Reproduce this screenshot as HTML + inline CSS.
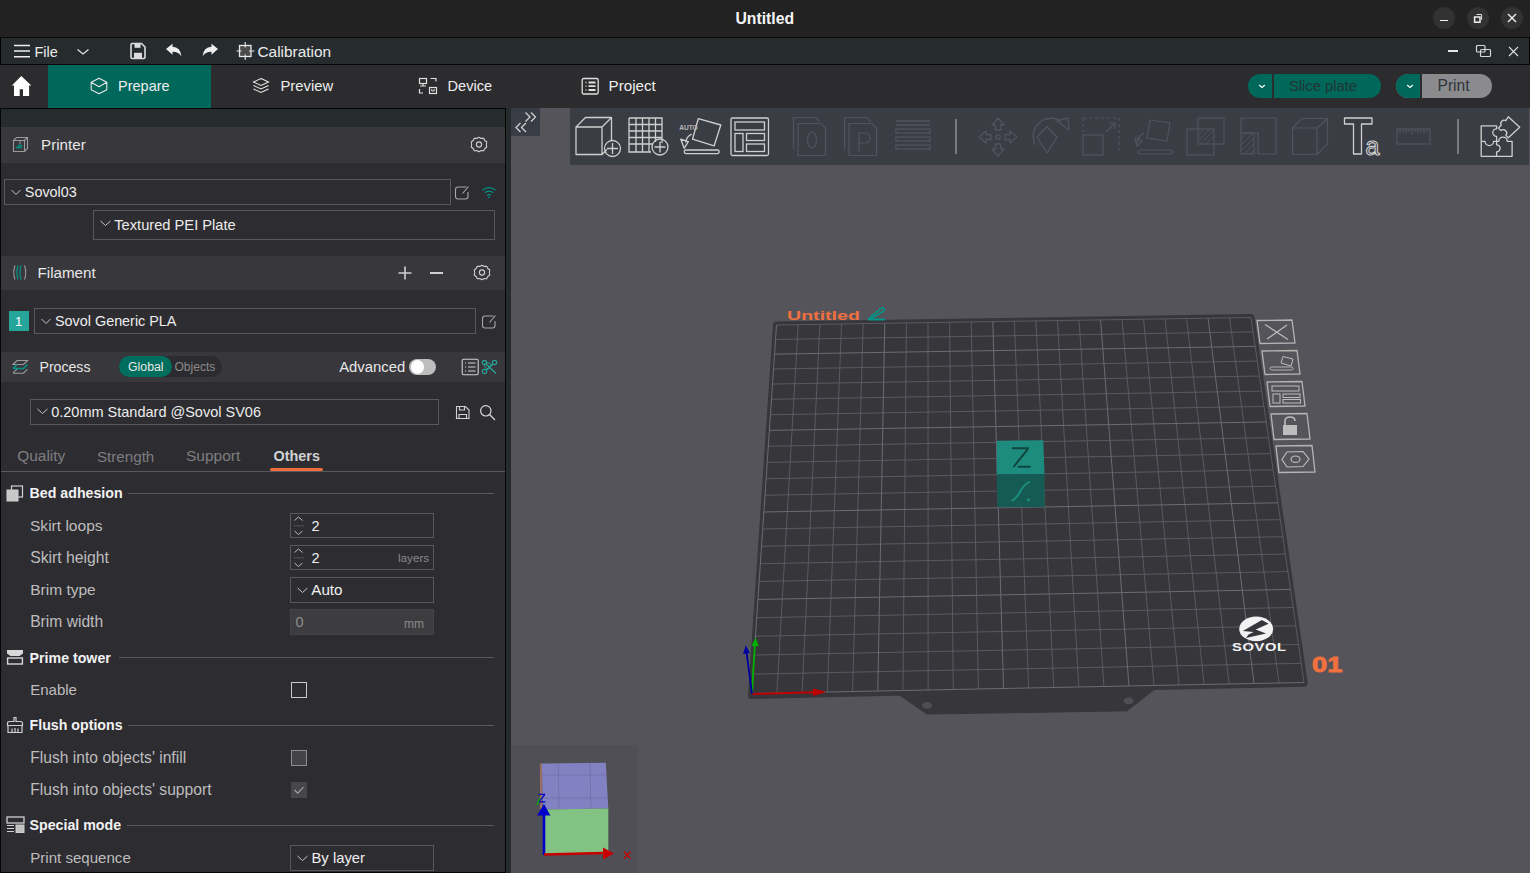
<!DOCTYPE html>
<html><head><meta charset="utf-8">
<style>
*{margin:0;padding:0;box-sizing:border-box}
html,body{width:1530px;height:873px;overflow:hidden;background:#55545a;font-family:"Liberation Sans",sans-serif;color:#e8e8e8}
.a{position:absolute}
.t{position:absolute;white-space:nowrap;line-height:1}
svg{position:absolute;overflow:visible}
</style></head><body>
<div class="a" style="left:0px;top:0px;width:1530px;height:37px;background:#222222;"></div>
<div class="t" style="left:735.5px;top:10.61px;font-size:15.75px;color:#f4f4f4;font-weight:bold;">Untitled</div>
<div class="a" style="left:1433px;top:7px;width:22px;height:22px;border-radius:50%;background:#323232"></div>
<div class="a" style="left:1467px;top:7px;width:22px;height:22px;border-radius:50%;background:#323232"></div>
<div class="a" style="left:1501px;top:7px;width:22px;height:22px;border-radius:50%;background:#323232"></div>
<div class="a" style="left:1440px;top:19.5px;width:8px;height:1.8px;background:#f0f0f0;"></div>
<svg style="left:1472px;top:13px;" width="12" height="11" viewBox="0 0 12 11"><rect x="2.6" y="4" width="5.4" height="5.2" fill="none" stroke="#f0f0f0" stroke-width="1.5"/><path d="M4.5 1.5H9.6V6.8" fill="none" stroke="#f0f0f0" stroke-width="0.9"/></svg>
<svg style="left:1507px;top:13px;" width="10" height="10" viewBox="0 0 10 10"><path d="M1 1L9 9M9 1L1 9" stroke="#f0f0f0" stroke-width="1.4"/></svg>
<div class="a" style="left:0px;top:37px;width:1530px;height:1px;background:#080808;"></div>
<div class="a" style="left:0px;top:38px;width:1530px;height:26px;background:#262b2e;"></div>
<div class="a" style="left:0px;top:38px;width:1px;height:26px;background:#000;"></div>
<div class="a" style="left:1529px;top:38px;width:1px;height:26px;background:#000;"></div>
<div class="a" style="left:0px;top:64px;width:1530px;height:1px;background:#080808;"></div>
<svg style="left:13px;top:44px;" width="18" height="14" viewBox="0 0 18 14"><path d="M1 1.5H17M1 7H17M1 12.7H17" stroke="#ececec" stroke-width="1.4"/></svg>
<div class="t" style="left:34.5px;top:44.77px;font-size:14.5px;color:#ececec;">File</div>
<svg style="left:76px;top:48px;" width="14" height="8" viewBox="0 0 14 8"><path d="M1.5 1.5L7 6L12.5 1.5" fill="none" stroke="#e0e0e0" stroke-width="1.3"/></svg>
<svg style="left:129px;top:42px;" width="18" height="18" viewBox="0 0 18 18"><path d="M2.2 1.5H12.5L16 5V15.3Q16 16.5 14.8 16.5H3.2Q2 16.5 2 15.3V2.7Q2 1.5 3.2 1.5Z" fill="none" stroke="#dcdcdc" stroke-width="1.6"/><rect x="5.5" y="2" width="6" height="3.8" fill="#dcdcdc"/><rect x="5" y="10.8" width="8" height="5.2" fill="#dcdcdc"/></svg>
<svg style="left:165px;top:43px;" width="18" height="15" viewBox="0 0 18 15"><path d="M1 6L7.5 0.8V3.8Q15.5 4 16.5 13.5Q14 8.8 7.5 8.8V11.8Z" fill="#eeeeee"/></svg>
<svg style="left:201px;top:43px;" width="18" height="15" viewBox="0 0 18 15"><path d="M17 6L10.5 0.8V3.8Q2.5 4 1.5 13.5Q4 8.8 10.5 8.8V11.8Z" fill="#eeeeee"/></svg>
<svg style="left:236px;top:42px;" width="19" height="18" viewBox="0 0 19 18"><rect x="3.5" y="3.5" width="11.5" height="11" fill="#4a4a4a" stroke="#e8e8e8" stroke-width="1.3"/><path d="M9.2 0V5.5M9.2 12.5V18M0.5 9H5.5M13 9H18.5" stroke="#e8e8e8" stroke-width="1.1"/></svg>
<div class="t" style="left:257.5px;top:43.71px;font-size:15.4px;color:#ececec;">Calibration</div>
<div class="a" style="left:1448px;top:50px;width:10px;height:1.5px;background:#e8e8e8;"></div>
<svg style="left:1475px;top:44px;" width="17" height="14" viewBox="0 0 17 14"><rect x="1.5" y="1.5" width="8.5" height="6.5" rx="1" fill="none" stroke="#d8d8d8" stroke-width="1.2"/><rect x="5.5" y="5.5" width="10" height="7" rx="1" fill="none" stroke="#d8d8d8" stroke-width="1.2"/></svg>
<svg style="left:1508px;top:46px;" width="11" height="11" viewBox="0 0 11 11"><path d="M1 1L10 10M10 1L1 10" stroke="#e0e0e0" stroke-width="1.1"/></svg>
<div class="a" style="left:0px;top:65px;width:1530px;height:43px;background:#2c2c2f;"></div>
<div class="a" style="left:48px;top:65px;width:163px;height:43px;background:#00675b;"></div>
<svg style="left:11px;top:75px;" width="21" height="22" viewBox="0 0 21 22"><path d="M10.3 0.9L0.8 10.6H3V21H8.7V14.2H12V21H18.1V10.6H20.3Z" fill="#ffffff"/></svg>
<svg style="left:90px;top:77px;" width="18" height="18" viewBox="0 0 18 18"><path d="M9 1.2L16.8 5.3V12.8L9 16.8L1.2 12.8V5.3Z M1.2 5.3L9 9.8L16.8 5.3" fill="none" stroke="#e8e8e8" stroke-width="1.1" stroke-linejoin="round"/></svg>
<div class="t" style="left:118.0px;top:78.97px;font-size:14.5px;color:#eeeeee;">Prepare</div>
<svg style="left:252px;top:77px;" width="18" height="18" viewBox="0 0 18 18"><path d="M9 1.5L16.5 5L9 8.5L1.5 5Z" fill="none" stroke="#e8e8e8" stroke-width="1.1"/><path d="M1.5 8.5L9 12L16.5 8.5M1.5 12L9 15.5L16.5 12" fill="none" stroke="#e8e8e8" stroke-width="1.1"/></svg>
<div class="t" style="left:280.5px;top:78.72px;font-size:14.8px;color:#eeeeee;">Preview</div>
<svg style="left:418px;top:77px;" width="20" height="18" viewBox="0 0 20 18"><rect x="1.5" y="1.5" width="7" height="5" fill="none" stroke="#e0e0e0" stroke-width="1.2"/><path d="M5 6.5V9M2 9H8" stroke="#e0e0e0" stroke-width="1.2"/><path d="M12.5 1.5H18V4.5M1.5 12V16H5" fill="none" stroke="#e0e0e0" stroke-width="1.2"/><rect x="11.5" y="10.5" width="7" height="6" fill="none" stroke="#e0e0e0" stroke-width="1.2"/><path d="M13.8 12V14H16.2V12" fill="none" stroke="#e0e0e0" stroke-width="1"/></svg>
<div class="t" style="left:447.5px;top:78.89px;font-size:14.6px;color:#eeeeee;">Device</div>
<svg style="left:581px;top:77px;" width="19" height="18" viewBox="0 0 19 18"><rect x="1.2" y="1.5" width="16" height="15.5" rx="1.5" fill="none" stroke="#e0e0e0" stroke-width="1.3"/><path d="M4.5 5.5H5.5M4.5 9.2H5.5M4.5 13H5.5" stroke="#e0e0e0" stroke-width="1.3"/><path d="M7.5 5.5H14.5M7.5 9.2H14.5M7.5 13H14.5" stroke="#e0e0e0" stroke-width="1.8"/></svg>
<div class="t" style="left:608.5px;top:78.38px;font-size:15.2px;color:#eeeeee;">Project</div>
<div class="a" style="left:1248px;top:74px;width:133px;height:24px;border-radius:12px;background:#00675b;overflow:hidden"><div class="a" style="left:23.5px;top:0;width:2.5px;height:24px;background:#2c2c2f"></div></div>
<svg style="left:1256px;top:82px;" width="12" height="8" viewBox="0 0 12 8"><path d="M3.2 3L6 5.4L8.8 3" fill="none" stroke="#fff" stroke-width="1.2"/></svg>
<div class="t" style="left:1289.0px;top:78.77px;font-size:14.74px;color:#223532;">Slice plate</div>
<div class="a" style="left:1396px;top:74px;width:96px;height:24px;border-radius:12px;background:#8b8b8d;overflow:hidden"><div class="a" style="left:0;top:0;width:24px;height:24px;background:#00675b"></div><div class="a" style="left:24px;top:0;width:2px;height:24px;background:#2c2c2f"></div></div>
<svg style="left:1404px;top:82px;" width="12" height="8" viewBox="0 0 12 8"><path d="M3.2 3L6 5.4L8.8 3" fill="none" stroke="#fff" stroke-width="1.2"/></svg>
<div class="t" style="left:1437.5px;top:78.34px;font-size:15.6px;color:#30343c;">Print</div>
<div class="a" style="left:0px;top:108px;width:506px;height:765px;background:#2d2c31;"></div>
<div class="a" style="left:0px;top:108px;width:506px;height:1px;background:#050505;"></div>
<div class="a" style="left:0px;top:108px;width:1px;height:765px;background:#050505;"></div>
<div class="a" style="left:505px;top:108px;width:1px;height:765px;background:#050505;"></div>
<div class="a" style="left:0px;top:872px;width:506px;height:1px;background:#050505;"></div>
<div class="a" style="left:506px;top:108px;width:5px;height:765px;background:#262b2e;"></div>
<div class="a" style="left:1px;top:109px;width:504px;height:18px;background:#262b2e;"></div>
<div class="a" style="left:1px;top:127px;width:504px;height:36px;background:#38373c;"></div>
<svg style="left:12px;top:136px;" width="17" height="17" viewBox="0 0 17 17"><path d="M1.5 4.5L4.5 1.5H15.5V12.5L12.5 15.5H1.5Z M1.5 4.5H12.5V15.5 M12.5 4.5L15.5 1.5" fill="none" stroke="#9a9a9a" stroke-width="1.1"/><path d="M8 4.5V8" stroke="#9a9a9a" stroke-width="1"/><path d="M4 11.5H10M6 9.5H10" stroke="#009688" stroke-width="1.5"/></svg>
<div class="t" style="left:41.0px;top:137.18px;font-size:15.2px;color:#e6e6e6;">Printer</div>
<svg style="left:469px;top:135px;" width="20" height="20" viewBox="0 0 20 20"><path d="M10 2.2L12.2 3.4L14.7 3.2L15.8 5.5L17.8 7L17.3 9.5L17.8 12L15.8 13.5L14.7 15.8L12.2 15.6L10 16.8L7.8 15.6L5.3 15.8L4.2 13.5L2.2 12L2.7 9.5L2.2 7L4.2 5.5L5.3 3.2L7.8 3.4Z" fill="none" stroke="#d0d0d0" stroke-width="1.1" stroke-linejoin="round"/><circle cx="10" cy="9.5" r="2.6" fill="none" stroke="#d0d0d0" stroke-width="1.1"/></svg>
<div class="a" style="left:4px;top:179px;width:447px;height:26px;background:transparent;border:1px solid #59585c;"></div>
<svg style="left:10px;top:188px;" width="12" height="8" viewBox="0 0 12 8"><path d="M1.5 2L6 6.5L10.5 2" fill="none" stroke="#c8c8c8" stroke-width="1"/></svg>
<div class="t" style="left:24.8px;top:184.66px;font-size:14.4px;color:#ececec;">Sovol03</div>
<svg style="left:454px;top:184px;" width="16" height="16" viewBox="0 0 16 16"><path d="M12.5 3H4Q1.5 3 1.5 5.5V12.5Q1.5 15 4 15H11.5Q14 15 14 12.5V8" fill="none" stroke="#a8a8a8" stroke-width="1.1"/><path d="M8.5 9.5L14.5 2.5" stroke="#a8a8a8" stroke-width="1.1"/></svg>
<svg style="left:481px;top:185px;" width="16" height="14" viewBox="0 0 16 14"><path d="M1.5 5.2Q8 0 14.5 5.2M3.8 7.8Q8 4.5 12.2 7.8M6 10.3Q8 9 10 10.3" fill="none" stroke="#009688" stroke-width="1.3"/><circle cx="8" cy="12.3" r="0.9" fill="#009688"/></svg>
<div class="a" style="left:93px;top:210px;width:402px;height:30px;background:transparent;border:1px solid #59585c;"></div>
<svg style="left:99px;top:219px;" width="13" height="8" viewBox="0 0 13 8"><path d="M1.5 2L6.5 6.5L11.5 2" fill="none" stroke="#c8c8c8" stroke-width="1"/></svg>
<div class="t" style="left:114.3px;top:217.54px;font-size:14.66px;color:#ececec;">Textured PEI Plate</div>
<div class="a" style="left:1px;top:256px;width:504px;height:34px;background:#38373c;"></div>
<svg style="left:11px;top:264px;" width="17" height="17" viewBox="0 0 17 17"><path d="M4 1.5Q1.5 8.5 4 15.5M13.5 1.5Q16 8.5 13.5 15.5" fill="none" stroke="#9a9a9a" stroke-width="1.1"/><path d="M7 1.5Q4.8 8.5 7 15.5M10 1.5Q7.8 8.5 10 15.5" fill="none" stroke="#009688" stroke-width="1.2"/></svg>
<div class="t" style="left:37.5px;top:265.18px;font-size:15.2px;color:#e6e6e6;">Filament</div>
<svg style="left:397px;top:265px;" width="16" height="16" viewBox="0 0 16 16"><path d="M8 1.5V14.5M1.5 8H14.5" stroke="#d0d0d0" stroke-width="1.6"/></svg>
<div class="a" style="left:430px;top:272px;width:12.5px;height:1.7px;background:#d0d0d0;"></div>
<svg style="left:472px;top:263px;" width="20" height="20" viewBox="0 0 20 20"><path d="M10 2.2L12.2 3.4L14.7 3.2L15.8 5.5L17.8 7L17.3 9.5L17.8 12L15.8 13.5L14.7 15.8L12.2 15.6L10 16.8L7.8 15.6L5.3 15.8L4.2 13.5L2.2 12L2.7 9.5L2.2 7L4.2 5.5L5.3 3.2L7.8 3.4Z" fill="none" stroke="#d0d0d0" stroke-width="1.1" stroke-linejoin="round"/><circle cx="10" cy="9.5" r="2.6" fill="none" stroke="#d0d0d0" stroke-width="1.1"/></svg>
<div class="a" style="left:9px;top:311px;width:20px;height:20px;background:#26a69a;"></div>
<div class="t" style="left:15.0px;top:315.25px;font-size:13px;color:#ffffff;">1</div>
<div class="a" style="left:34px;top:308px;width:442px;height:26px;background:transparent;border:1px solid #59585c;"></div>
<svg style="left:40px;top:317px;" width="12" height="8" viewBox="0 0 12 8"><path d="M1.5 2L6 6.5L10.5 2" fill="none" stroke="#c8c8c8" stroke-width="1"/></svg>
<div class="t" style="left:55.0px;top:313.67px;font-size:14.39px;color:#ececec;">Sovol Generic PLA</div>
<svg style="left:481px;top:313px;" width="16" height="16" viewBox="0 0 16 16"><path d="M12.5 3H4Q1.5 3 1.5 5.5V12.5Q1.5 15 4 15H11.5Q14 15 14 12.5V8" fill="none" stroke="#a8a8a8" stroke-width="1.1"/><path d="M8.5 9.5L14.5 2.5" stroke="#a8a8a8" stroke-width="1.1"/></svg>
<div class="a" style="left:1px;top:352px;width:504px;height:30px;background:#38373c;"></div>
<svg style="left:12px;top:359px;" width="17" height="17" viewBox="0 0 17 17"><path d="M1 5.5L5 1.5H15.5L11.5 5.5Z" fill="none" stroke="#9a9a9a" stroke-width="1.1"/><path d="M1 9.5L5 5.5M15.5 5.5L11.5 9.5H1" fill="none" stroke="#009688" stroke-width="1.5"/><path d="M1 14.2L5 10.2M15.5 10.2L11.5 14.2H1" fill="none" stroke="#9a9a9a" stroke-width="1.1"/></svg>
<div class="t" style="left:39.5px;top:359.90px;font-size:14.12px;color:#e6e6e6;">Process</div>
<div class="a" style="left:119px;top:355.5px;width:103px;height:21.5px;border-radius:10.75px;background:#2c2b30"></div>
<div class="a" style="left:119px;top:355.5px;width:52.5px;height:21.5px;border-radius:10.75px;background:#006e5e"></div>
<div class="t" style="left:128.0px;top:360.85px;font-size:12.3px;color:#e8e8e8;">Global</div>
<div class="t" style="left:174.4px;top:361.01px;font-size:12.1px;color:#8a8a8a;">Objects</div>
<div class="t" style="left:339.2px;top:359.67px;font-size:14.86px;color:#e6e6e6;">Advanced</div>
<div class="a" style="left:409px;top:359px;width:27px;height:16px;border-radius:8px;background:#bdbdbd"></div>
<div class="a" style="left:410.5px;top:360.2px;width:13.6px;height:13.6px;border-radius:50%;background:#ffffff"></div>
<svg style="left:461px;top:358px;" width="19" height="18" viewBox="0 0 19 18"><rect x="1.2" y="1.2" width="16" height="15.6" rx="1.5" fill="none" stroke="#cfcfcf" stroke-width="1.1"/><path d="M4 5H5M4 9H5M4 13H5M7 5H14.5M7 9H14.5M7 13H14.5" stroke="#cfcfcf" stroke-width="1.2"/></svg>
<svg style="left:481px;top:359px;" width="17" height="16" viewBox="0 0 17 16"><circle cx="3.5" cy="3.5" r="2.2" fill="none" stroke="#26a69a" stroke-width="1.2"/><circle cx="13.5" cy="3.5" r="2.2" fill="none" stroke="#26a69a" stroke-width="1.2"/><circle cx="3.5" cy="12.5" r="2.2" fill="none" stroke="#26a69a" stroke-width="1.2"/><path d="M5 5L15 14.5M11.8 5.2L5.5 11" stroke="#26a69a" stroke-width="1.3"/><circle cx="6.5" cy="6.5" r="3" fill="none" stroke="#26a69a" stroke-width="1"/></svg>
<div class="a" style="left:30px;top:399px;width:409px;height:26px;background:transparent;border:1px solid #59585c;"></div>
<svg style="left:36px;top:407px;" width="13" height="8" viewBox="0 0 13 8"><path d="M1.5 2L6.5 6.5L11.5 2" fill="none" stroke="#c8c8c8" stroke-width="1"/></svg>
<div class="t" style="left:51.2px;top:404.58px;font-size:14.5px;color:#ececec;">0.20mm Standard @Sovol SV06</div>
<svg style="left:455px;top:405px;" width="16" height="15" viewBox="0 0 16 15"><path d="M1.5 1.5H10.5L14 5V13.5H1.5Z" fill="none" stroke="#d0d0d0" stroke-width="1.1"/><path d="M4.5 1.5V5H9.5V1.5M4 13.5V9.5H11.5V13.5" fill="none" stroke="#d0d0d0" stroke-width="1.1"/></svg>
<svg style="left:479px;top:404px;" width="18" height="18" viewBox="0 0 18 18"><circle cx="6.8" cy="6.8" r="5.2" fill="none" stroke="#d8d8d8" stroke-width="1.2"/><path d="M10.5 10.5L16 16" stroke="#d8d8d8" stroke-width="1.3"/></svg>
<div class="t" style="left:17.2px;top:448.46px;font-size:15.46px;color:#7e7e80;">Quality</div>
<div class="t" style="left:97.0px;top:448.71px;font-size:15.16px;color:#7e7e80;">Strength</div>
<div class="t" style="left:186.0px;top:448.44px;font-size:15.48px;color:#7e7e80;">Support</div>
<div class="t" style="left:273.6px;top:449.36px;font-size:14.4px;color:#d2d2d2;font-weight:bold;">Others</div>
<div class="a" style="left:270px;top:467.5px;width:53px;height:3.5px;border-radius:2px;background:#f26b3a"></div>
<div class="a" style="left:1px;top:471px;width:504px;height:1px;background:#5a5a5e;"></div>
<svg style="left:6px;top:485px" width="18" height="17" viewBox="0 0 18 17"><rect x="5.5" y="1" width="11" height="11" fill="none" stroke="#d0d0d0" stroke-width="1.2"/><rect x="1" y="5" width="11" height="11" fill="#c8c8c8" stroke="#d0d0d0" stroke-width="1"/></svg>
<div class="t" style="left:29.6px;top:486.13px;font-size:14.2px;color:#f2f2f2;font-weight:bold;">Bed adhesion</div>
<div class="a" style="left:128px;top:493px;width:366px;height:1px;background:#5a5a5e;"></div>
<div class="t" style="left:30.0px;top:517.58px;font-size:15.55px;color:#bdbdbd;">Skirt loops</div>
<div class="a" style="left:290px;top:513px;width:144px;height:25px;background:transparent;border:1px solid #59585c;"></div>
<svg style="left:292px;top:515px;" width="14" height="21" viewBox="0 0 14 21"><path d="M2.5 5.5L6.5 2L10.5 5.5M2.5 16L6.5 19.5L10.5 16" fill="none" stroke="#bdbdbd" stroke-width="1"/><path d="M1.5 10.8H12.5" stroke="#555559" stroke-width="1"/></svg>
<div class="t" style="left:311.5px;top:518.77px;font-size:14.5px;color:#f0f0f0;">2</div>
<div class="t" style="left:30.2px;top:550.01px;font-size:15.75px;color:#bdbdbd;">Skirt height</div>
<div class="a" style="left:290px;top:545px;width:144px;height:25px;background:transparent;border:1px solid #59585c;"></div>
<svg style="left:292px;top:547px;" width="14" height="21" viewBox="0 0 14 21"><path d="M2.5 5.5L6.5 2L10.5 5.5M2.5 16L6.5 19.5L10.5 16" fill="none" stroke="#bdbdbd" stroke-width="1"/><path d="M1.5 10.8H12.5" stroke="#555559" stroke-width="1"/></svg>
<div class="t" style="left:311.5px;top:550.77px;font-size:14.5px;color:#f0f0f0;">2</div>
<div class="t" style="left:398.0px;top:552.35px;font-size:11.7px;color:#8a8a8a;">layers</div>
<div class="t" style="left:30.2px;top:582.30px;font-size:15.53px;color:#bdbdbd;">Brim type</div>
<div class="a" style="left:290px;top:577px;width:144px;height:25.5px;background:transparent;border:1px solid #59585c;"></div>
<svg style="left:296px;top:586px;" width="13" height="8" viewBox="0 0 13 8"><path d="M1.5 2L6.5 6.5L11.5 2" fill="none" stroke="#c8c8c8" stroke-width="1"/></svg>
<div class="t" style="left:311.3px;top:581.98px;font-size:15.2px;color:#f0f0f0;">Auto</div>
<div class="t" style="left:30.2px;top:613.71px;font-size:15.64px;color:#bdbdbd;">Brim width</div>
<div class="a" style="left:290px;top:609px;width:144px;height:26px;background:#3d3d40;border:1px solid #444447;"></div>
<div class="t" style="left:295.5px;top:615.37px;font-size:14.5px;color:#8c8c8c;">0</div>
<div class="t" style="left:404.0px;top:617.50px;font-size:12px;color:#8c8c8c;">mm</div>
<svg style="left:6px;top:649px" width="18" height="16" viewBox="0 0 18 16"><path d="M1 1H17V4.5L13.5 7H4.5L1 4.5Z" fill="#d8d8d8"/><rect x="1.6" y="9" width="14.8" height="6" fill="none" stroke="#d8d8d8" stroke-width="1.4"/></svg>
<div class="t" style="left:29.6px;top:650.63px;font-size:14.2px;color:#f2f2f2;font-weight:bold;">Prime tower</div>
<div class="a" style="left:118.7px;top:657px;width:375.3px;height:1px;background:#5a5a5e;"></div>
<div class="t" style="left:30.2px;top:682.05px;font-size:15.0px;color:#bdbdbd;">Enable</div>
<div class="a" style="left:291px;top:682px;width:16px;height:16px;background:transparent;border:1.3px solid #c8c8c8;"></div>
<svg style="left:6px;top:716px" width="18" height="18" viewBox="0 0 18 18"><path d="M8 1.5H10V5.5H14.5Q16.5 5.5 16.5 7.5V9.5H1.5V7.5Q1.5 5.5 3.5 5.5H8Z" fill="none" stroke="#d0d0d0" stroke-width="1.2"/><path d="M2 9.5V16.5H16V9.5M6 12.5V16.5M9 12V16.5M12 12.5V16.5" fill="none" stroke="#d0d0d0" stroke-width="1.2"/></svg>
<div class="t" style="left:29.6px;top:718.33px;font-size:14.2px;color:#f2f2f2;font-weight:bold;">Flush options</div>
<div class="a" style="left:128.4px;top:725px;width:365.6px;height:1px;background:#5a5a5e;"></div>
<div class="t" style="left:30.3px;top:750.01px;font-size:15.63px;color:#bdbdbd;">Flush into objects' infill</div>
<div class="a" style="left:291px;top:750px;width:16px;height:16px;background:#444448;border:1px solid #8e8e92;"></div>
<div class="t" style="left:30.3px;top:782.10px;font-size:15.65px;color:#bdbdbd;">Flush into objects' support</div>
<div class="a" style="left:291px;top:782px;width:16px;height:16px;background:#47474b;"></div>
<svg style="left:292px;top:783px;" width="14" height="14" viewBox="0 0 14 14"><path d="M2.5 7L5.8 10.2L11.5 4" fill="none" stroke="#a8a8a8" stroke-width="1.1"/></svg>
<svg style="left:6px;top:816px" width="19" height="17" viewBox="0 0 19 17"><rect x="1" y="1" width="17" height="6" fill="none" stroke="#d0d0d0" stroke-width="1.3"/><path d="M1 9.5H8M1 12.5H8M1 15.5H8" stroke="#d0d0d0" stroke-width="1.2"/><rect x="10" y="9" width="8" height="7.5" fill="#c0c0c0" stroke="#d0d0d0" stroke-width="1"/></svg>
<div class="t" style="left:29.6px;top:818.03px;font-size:14.2px;color:#f2f2f2;font-weight:bold;">Special mode</div>
<div class="a" style="left:126.8px;top:825px;width:367.2px;height:1px;background:#5a5a5e;"></div>
<div class="t" style="left:30.3px;top:850.39px;font-size:15.07px;color:#bdbdbd;">Print sequence</div>
<div class="a" style="left:290px;top:845px;width:144px;height:26px;background:transparent;border:1px solid #59585c;"></div>
<svg style="left:296px;top:854px;" width="13" height="8" viewBox="0 0 13 8"><path d="M1.5 2L6.5 6.5L11.5 2" fill="none" stroke="#c8c8c8" stroke-width="1"/></svg>
<div class="t" style="left:311.5px;top:851.21px;font-size:14.81px;color:#f0f0f0;">By layer</div>
<div class="a" style="left:511px;top:108px;width:1019px;height:765px;background:#55545a;"></div>
<div class="a" style="left:511px;top:108px;width:29px;height:28px;background:#3a3c45;"></div>
<svg style="left:511px;top:108px;" width="29" height="28" viewBox="0 0 29 28"><path d="M14.5 4.5L19 9L14.5 13.5M20 4.5L24.5 9L20 13.5M9.5 15L5 19.5L9.5 24M15 15L10.5 19.5L15 24" fill="none" stroke="#d0d0d0" stroke-width="1.3"/></svg>
<div class="a" style="left:570px;top:108px;width:959px;height:57px;background:#3b3d45;"></div>
<svg style="left:574px;top:115px;" width="48" height="42" viewBox="0 0 48 42"><g fill="none" stroke="#cfcfcf" stroke-width="1.3" stroke-linejoin="round"><path d="M2 12V39.5H28V12Z M2 12L11.5 2.5H37.5V26 M28 12L37.5 2.5 M28 39.5L33 34.5"/><circle cx="38.5" cy="33.5" r="8"/><path d="M38.5 28V39M33 33.5H44"/></g></svg>
<svg style="left:627px;top:116px;" width="46" height="42" viewBox="0 0 46 42"><g fill="none" stroke="#cfcfcf" stroke-width="1.3"><path d="M2 2H35V27M2 2V36H24M2 8.5H35M2 15H35M2 21.5H35M2 28H26M9 2V36M15.5 2V36M22 2V36M28.5 2V26"/><circle cx="33" cy="31" r="8"/><path d="M33 25.5V36.5M27.5 31H38.5"/></g></svg>
<svg style="left:678px;top:116px;" width="45" height="42" viewBox="0 0 45 42"><g fill="none" stroke="#cfcfcf" stroke-width="1.3" stroke-linejoin="round"><path d="M20.3 2.7L42.8 9L36.2 29.8L14.5 23.2Z"/><rect x="6.2" y="34" width="35" height="3.6" rx="1.8"/><path d="M13.7 18.2Q8.5 20.5 7.5 26.5"/><path d="M2.8 23.2L10.3 25.7L6.2 32.3Z"/></g><text x="1.2" y="13.7" font-family="Liberation Sans" font-weight="bold" font-size="6.6" fill="#b8b8b8">AUTO</text></svg>
<svg style="left:729px;top:116px;" width="42" height="42" viewBox="0 0 42 42"><g fill="none" stroke="#cfcfcf" stroke-width="1.3"><rect x="2" y="2" width="37.5" height="37.5" rx="1.5"/><rect x="6" y="6" width="29.5" height="8"/><rect x="6" y="17.5" width="8" height="18"/><rect x="17.5" y="17.5" width="18" height="7"/><rect x="17.5" y="28" width="18" height="7.5"/></g></svg>
<svg style="left:792px;top:116px;" width="38" height="42" viewBox="0 0 38 42"><g fill="none" stroke="#52525c" stroke-width="1.2"><path d="M1.5 33V1.5H24L27.5 5.5 M6 39.5V7.5H29L33.5 12V39.5Z"/><ellipse cx="20" cy="24" rx="4.5" ry="8"/></g></svg>
<svg style="left:843px;top:116px;" width="38" height="42" viewBox="0 0 38 42"><g fill="none" stroke="#52525c" stroke-width="1.2"><path d="M1.5 33V1.5H24L27.5 5.5 M6 39.5V7.5H29L33.5 12V39.5Z"/><path d="M16 36V17H22Q27 17 27 22Q27 27 22 27H16"/></g></svg>
<svg style="left:894px;top:116px;" width="40" height="42" viewBox="0 0 40 42"><g fill="none" stroke="#52525c" stroke-width="1.3"><path d="M2 5H36M2 9H36"/><rect x="2" y="13" width="34" height="4"/><rect x="2" y="21" width="34" height="4"/><rect x="2" y="29" width="34" height="4"/></g></svg>
<div class="a" style="left:955px;top:119px;width:2px;height:35px;background:#7a7a80;"></div>
<svg style="left:977px;top:116px;" width="42" height="42" viewBox="0 0 42 42"><g fill="none" stroke="#52525c" stroke-width="1.3" stroke-linejoin="round"><path d="M21 2L27 9H23.5V14H18.5V9H15Z M21 40L27 33H23.5V28H18.5V33H15Z M2 21L9 15V18.5H14V23.5H9V27Z M40 21L33 15V18.5H28V23.5H33V27Z"/><circle cx="21" cy="21" r="2.2"/></g></svg>
<svg style="left:1031px;top:117px;" width="42" height="42" viewBox="0 0 42 42"><g fill="none" stroke="#52525c" stroke-width="1.3" stroke-linejoin="round"><path d="M16 9.5L26 20L16 36L6 20Z"/><path d="M4 28Q-2 12 12 3Q22 -1 30 4"/><path d="M26 4L37 1L38 13Z"/></g></svg>
<svg style="left:1081px;top:116px;" width="44" height="42" viewBox="0 0 44 42"><g fill="none" stroke="#52525c" stroke-width="1.2"><path d="M2 2H38V38 M2 2V16" stroke-dasharray="3 3"/><rect x="2" y="19" width="20" height="20"/><path d="M25 16L33 8M28 7H34V13"/></g></svg>
<svg style="left:1134px;top:116px;" width="44" height="42" viewBox="0 0 44 42"><g fill="none" stroke="#52525c" stroke-width="1.2"><path d="M16 4L36 7L33 25L13 22Z"/><rect x="4" y="34" width="34" height="4" rx="2"/><path d="M10 17Q4 20 3 27M1 22L3 30L8 25Z"/></g></svg>
<svg style="left:1185px;top:116px;" width="44" height="42" viewBox="0 0 44 42"><g fill="none" stroke="#52525c" stroke-width="1.2"><rect x="13" y="2" width="26" height="26"/><rect x="2" y="13" width="27" height="26"/><path d="M13 19L19 13M13 25L25 13M15 28L28 15M21 28L28 21" stroke-width="0.9"/></g></svg>
<svg style="left:1239px;top:116px;" width="40" height="42" viewBox="0 0 40 42"><g fill="none" stroke="#52525c" stroke-width="1.2"><path d="M2 2H37V38H19V17H2Z"/><rect x="2" y="17" width="13" height="21"/><path d="M2 23L8 17M2 29L14 17M2 35L15 22M5 38L15 28M11 38L15 34" stroke-width="0.9"/></g></svg>
<svg style="left:1291px;top:116px;" width="40" height="42" viewBox="0 0 40 42"><g fill="none" stroke="#52525c" stroke-width="1.2"><path d="M1.5 12V38.5H26V12Z M1.5 12L11 2.5H36.5V28L26 38.5 M26 12L36.5 2.5"/></g></svg>
<svg style="left:1343px;top:116px;" width="40" height="42" viewBox="0 0 40 42"><g fill="none" stroke="#cfcfcf" stroke-width="1.3" stroke-linejoin="round"><path d="M1.5 2H29V8H18.5V38H10.5V8H1.5Z"/></g><text x="22.5" y="39" font-family="Liberation Sans" font-size="25" fill="none" stroke="#cfcfcf" stroke-width="1.1">a</text></svg>
<svg style="left:1395px;top:127px;" width="38" height="19" viewBox="0 0 38 19"><g fill="none" stroke="#52525c" stroke-width="1.2"><rect x="2" y="2" width="33" height="15"/><path d="M5 2V6M8 2V5M11 2V6M14 2V5M17 2V8M20 2V5M23 2V6M26 2V5M29 2V6M32 2V5"/></g></svg>
<div class="a" style="left:1457px;top:119px;width:2px;height:35px;background:#7a7a80;"></div>
<svg style="left:1479px;top:115px;" width="43" height="43" viewBox="0 0 43 43"><g fill="none" stroke="#cfcfcf" stroke-width="1.3" stroke-linejoin="round"><path d="M2.2 10.8H17.6V13.8A3.8 3.8 0 0 0 17.6 21.4V26.3H19.8A4.2 4.2 0 0 1 28.2 26.3H33.1V41.3H2.2Z"/><path d="M2.2 26.3H6A4.3 4.3 0 0 0 14.6 26.3H17.6V29.8A3.5 3.5 0 0 1 17.6 36.8V41.3"/><path d="M29.3 1.8L40.7 12.3L29.3 22.8L26.8 20.4A3.4 3.4 0 0 0 22 15.6L19.4 13L22.2 10.2A3.4 3.4 0 0 1 26.8 5.6Z"/></g></svg>
<svg style="left:0;top:0" width="1530" height="873" viewBox="0 0 1530 873"><polygon points="776.72,325.31 1250.81,317.82 1303.90,682.93 751.76,695.21" fill="#37363b" stroke="#37363b" stroke-width="7.5" stroke-linejoin="round"/><polygon points="892.2,690 927,714.1 1127,710.8 1156.2,688" fill="#37363b" stroke="#37363b" stroke-width="1" stroke-linejoin="round"/><ellipse cx="927" cy="705.3" rx="5" ry="3.3" fill="#4f4e54"/><ellipse cx="1128.6" cy="700.8" rx="5" ry="3.3" fill="#4f4e54"/><path d="M776.50 325.00L1251.00 317.50M798.18 324.66L776.86 693.00M775.52 339.47L1253.08 331.85M819.85 324.31L802.10 692.49M841.50 323.97L827.33 691.99M773.53 368.99L1257.33 361.10M863.15 323.63L852.55 691.49M772.51 384.04L1259.50 376.02M771.48 399.29L1261.69 391.13M906.41 322.95L902.93 690.49M770.44 414.74L1263.92 406.45M928.02 322.60L928.11 689.99M949.63 322.26L953.26 689.48M768.31 446.28L1268.45 437.69M971.22 321.92L978.41 688.98M767.22 462.37L1270.77 453.64M766.12 478.68L1273.11 469.80M1014.38 321.24L1028.65 687.98M765.00 495.22L1275.49 486.18M1035.94 320.90L1053.76 687.48M1057.50 320.56L1078.84 686.98M762.72 528.99L1280.35 519.63M1079.04 320.22L1103.92 686.48M761.55 546.24L1282.83 536.71M760.37 563.73L1285.35 554.03M1122.09 319.54L1154.02 685.49M759.17 581.47L1287.90 571.60M1143.60 319.20L1179.05 684.99M1165.10 318.86L1204.07 684.49M756.72 617.73L1293.11 607.50M1186.59 318.52L1229.07 683.99M755.47 636.25L1295.77 625.84M754.20 655.05L1298.47 644.45M1229.54 317.84L1279.04 683.00M752.91 674.13L1301.22 663.33M1251.00 317.50L1304.00 682.50" stroke="#5f5e66" stroke-width="0.9" fill="none"/><path d="M776.50 325.00L751.60 693.50M774.53 354.13L1255.19 346.38M884.78 323.29L877.75 690.99M769.38 430.40L1266.17 421.97M992.81 321.58L1003.54 688.48M763.87 511.99L1277.91 502.79M1100.57 319.88L1128.98 685.99M757.95 599.47L1290.48 589.42M1208.07 318.18L1254.06 683.49M751.60 693.50L1304.00 682.50" stroke="#6c6b73" stroke-width="1" fill="none"/></svg>
<div class="t" style="left:787.0px;top:310.09px;font-size:12.6px;color:#f07040;font-weight:bold;transform:scaleX(1.555);transform-origin:0 0;">Untitled</div>
<svg style="left:866px;top:306px;" width="21" height="15" viewBox="0 0 21 15"><path d="M2 13.5H19" stroke="#009688" stroke-width="2"/><path d="M3.5 12L15 2.5Q17 1 18 2.5Q19 4 17 5.5L6 12Z" fill="none" stroke="#009688" stroke-width="1.6"/></svg>
<svg style="left:0;top:0" width="1530" height="873"><polygon points="1257,320.5 1292,320 1295,343 1260,343.5" fill="none" stroke="#b4b4b4" stroke-width="1.3" stroke-linejoin="round"/><path d="M1265 324.5L1288 339.5M1287 325L1267 339" stroke="#bdbdbd" stroke-width="1.2"/></svg>
<svg style="left:0;top:0" width="1530" height="873"><polygon points="1262,351 1297,350.5 1300,374 1265,374.5" fill="none" stroke="#b4b4b4" stroke-width="1.3" stroke-linejoin="round"/><path d="M1283 356.5L1293 359L1291 366L1281 363Z" fill="none" stroke="#bdbdbd" stroke-width="1"/><rect x="1270" y="367" width="23" height="3" rx="1.5" fill="none" stroke="#bdbdbd" stroke-width="0.9"/></svg>
<svg style="left:0;top:0" width="1530" height="873"><polygon points="1267,382 1302,381.5 1305,406 1270,406.5" fill="none" stroke="#b4b4b4" stroke-width="1.3" stroke-linejoin="round"/><rect x="1272" y="386" width="27" height="5" fill="none" stroke="#bdbdbd" stroke-width="1"/><rect x="1273" y="394" width="7" height="9" fill="none" stroke="#bdbdbd" stroke-width="1"/><rect x="1283" y="394" width="17" height="3.5" fill="none" stroke="#bdbdbd" stroke-width="1"/><rect x="1283" y="399.5" width="17.5" height="3.5" fill="none" stroke="#bdbdbd" stroke-width="1"/></svg>
<svg style="left:0;top:0" width="1530" height="873"><polygon points="1271,414 1307,413.5 1310,439 1274,439.5" fill="none" stroke="#b4b4b4" stroke-width="1.3" stroke-linejoin="round"/><rect x="1283" y="425" width="14" height="10" fill="#bdbdbd"/><path d="M1285 425V421Q1285 417 1290 417Q1295 417 1295 421" fill="none" stroke="#bdbdbd" stroke-width="1.6"/></svg>
<svg style="left:0;top:0" width="1530" height="873"><polygon points="1276,446 1312,445.5 1315,472 1279,472.5" fill="none" stroke="#b4b4b4" stroke-width="1.3" stroke-linejoin="round"/><path d="M1287 452L1303 451.5L1309 459L1303 466.5L1287 467L1282 459.5Z" fill="none" stroke="#bdbdbd" stroke-width="1.2"/><ellipse cx="1295.5" cy="459.2" rx="4.5" ry="3.2" fill="none" stroke="#bdbdbd" stroke-width="1.2"/></svg>
<svg style="left:0;top:0" width="1530" height="873"><polygon points="996.8,440.7 1043.3,440.3 1044.5,474 996.8,474.3" fill="#1d8c7f"/><polygon points="996.8,474.3 1044.5,474 1044.8,507 997.3,507.3" fill="#155a53"/><path d="M1012 448.3H1028.7M1028 448.8L1013.5 467M1018 466.8H1030.5" stroke="#10443f" stroke-width="1.9" fill="none"/><path d="M1030 481.5Q1024 484 1020 492Q1016 499 1011.5 501" stroke="#1d9080" stroke-width="1.8" fill="none"/><circle cx="1028.5" cy="499.8" r="1.5" fill="#1d9080"/></svg>
<svg style="left:0;top:0" width="1530" height="873"><path d="M752 694L815 692.3" stroke="#c00000" stroke-width="2"/><path d="M813 688.5L826.3 692L813 696Z" fill="#c00000"/><path d="M752 694L754.8 645" stroke="#00b000" stroke-width="1.8"/><path d="M751.5 646L755.6 637.4L758.8 646.3Z" fill="#00b000"/><path d="M752 694L746.5 652" stroke="#0000a0" stroke-width="1.8"/><path d="M743 654L745.8 645.3L749.8 653Z" fill="#0000a0"/></svg>
<svg style="left:0;top:0" width="1530" height="873"><ellipse cx="1256.2" cy="628.9" rx="17" ry="12.3" fill="#f2f2f2"/><path d="M1242.8 630.9L1261.9 620.1L1268.6 623.7L1255.7 629.4L1266 633.5L1245.9 638.1L1248.5 634.5L1253.6 632Z" fill="#37363b"/></svg>
<div class="t" style="left:1232.4px;top:642.32px;font-size:11.5px;color:#f2f2f2;font-weight:bold;letter-spacing:0.5px;transform:scaleX(1.28);transform-origin:0 0;">SOVOL</div>
<div class="t" style="left:1311.5px;top:654.92px;font-size:21.5px;color:#f07040;font-weight:bold;transform:scaleX(1.27);transform-origin:0 0;-webkit-text-stroke:0.9px #f07040;">01</div>
<div class="a" style="left:511px;top:745px;width:127px;height:128px;background:#504f55;"></div>
<svg style="left:0;top:0" width="1530" height="873"><polygon points="541.9,763.6 605.8,762.8 608.3,808.4 542.7,809.5" fill="#8282c2"/><path d="M558.3 763.4L559 809.2M590.2 763L590.8 808.7M542.2 775H606.6M542.5 798H607.6" stroke="#6e6ea8" stroke-width="0.8"/><polygon points="542.7,809.5 608.3,808.4 608.3,853.8 544.3,854.6" fill="#82c282"/><path d="M541 763.6V809" stroke="#e09070" stroke-width="1"/><path d="M544 855L544 815" stroke="#0000c8" stroke-width="2.6"/><path d="M537 815.5L544 804L550.5 815.5Z" fill="#0000c8"/><path d="M544 854.5L604 853" stroke="#c80000" stroke-width="2.6"/><path d="M603 847.5L614 853.5L603 859.5Z" fill="#c80000"/><path d="M624 851.5L630.5 858.5M630.5 851.5L624 858.5" stroke="#c80000" stroke-width="1.3"/><path d="M538.6 794.3H545M545 794.3L538.8 801.8H545.4" stroke="#0000c8" stroke-width="1.2" fill="none"/><path d="M537 805L540 798" stroke="#00b000" stroke-width="1.3"/></svg>
</body></html>
